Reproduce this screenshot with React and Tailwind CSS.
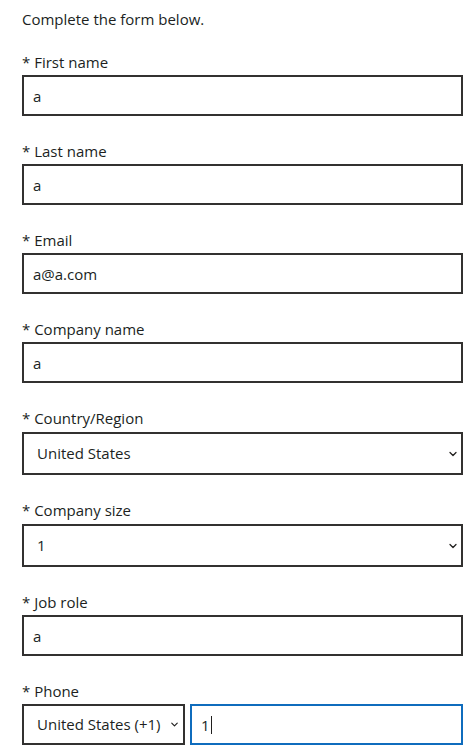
import { ChevronDown } from "lucide-react"

const font = { fontFamily: '"Open Sans", "Noto Sans", sans-serif' }

function Label({ children }) {
  return (
    <div className="h-5 leading-5 text-[15px] text-[#201f1e] mb-[3px]">
      * {children}
    </div>
  )
}

function TextField({ label, value }) {
  return (
    <div className="mb-[25px]">
      <Label>{label}</Label>
      <div className="flex h-[41px] w-[441px] items-center border-2 border-[#323130] bg-white px-[9px] pt-px text-[15px] text-[#201f1e]">
        {value}
      </div>
    </div>
  )
}

function SelectField({ label, value }) {
  return (
    <div className="mb-[25px]">
      <div className="mb-[4px] h-5 leading-5 text-[15px] text-[#201f1e]">* {label}</div>
      <div className="flex h-[43px] w-[441px] items-center justify-between border-2 border-[#323130] bg-white pl-[13px] pr-[2px] text-[15px] text-[#201f1e]">
        <span>{value}</span>
        <ChevronDown size={12} strokeWidth={2.5} className="text-[#201f1e]" />
      </div>
    </div>
  )
}

export default function App() {
  return (
    <div className="min-h-screen bg-white pl-[22px] pt-[9px]" style={font}>
      <p className="mb-[23px] h-5 leading-5 text-[15px] text-[#201f1e]">Complete the form below.</p>

      <TextField label="First name" value="a" />
      <TextField label="Last name" value="a" />
      <TextField label="Email" value="a@a.com" />
      <TextField label="Company name" value="a" />
      <SelectField label="Country/Region" value="United States" />
      <SelectField label="Company size" value="1" />
      <TextField label="Job role" value="a" />

      <div>
        <Label>Phone</Label>
        <div className="flex w-[441px] gap-[5px]">
          <div className="flex h-[41px] w-[163px] items-center justify-between border-2 border-[#323130] bg-white pl-[13px] pr-[3px] text-[15px] text-[#201f1e]">
            <span className="whitespace-nowrap">United States (+1)</span>
            <ChevronDown size={11} strokeWidth={2.5} className="shrink-0" />
          </div>
          <div className="flex h-[41px] flex-1 items-center border-2 border-[#0f6cbd] bg-white px-[9px] pt-px text-[15px] text-[#201f1e]">
            <span>1</span>
            <span className="ml-px inline-block h-[18px] w-px bg-[#201f1e]" />
          </div>
        </div>
      </div>
    </div>
  )
}
